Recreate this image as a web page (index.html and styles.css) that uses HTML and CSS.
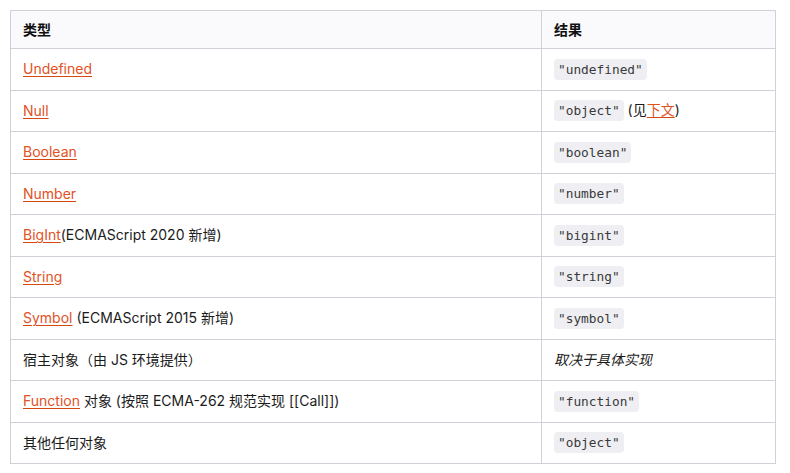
FILE: index.html
```html
<!DOCTYPE html>
<html lang="zh">
<head>
<meta charset="utf-8">
<link rel="stylesheet" href="styles.css">
</head>
<body>
<table class="tbl">
  <thead>
    <tr><th class="c1">类型</th><th>结果</th></tr>
  </thead>
  <tbody>
    <tr><td><a href="#">Undefined</a></td><td><code>"undefined"</code></td></tr>
    <tr><td><a href="#">Null</a></td><td><code>"object"</code> (见<a href="#">下文</a>)</td></tr>
    <tr><td><a href="#">Boolean</a></td><td><code>"boolean"</code></td></tr>
    <tr><td><a href="#">Number</a></td><td><code>"number"</code></td></tr>
    <tr><td><a href="#">BigInt</a>(ECMAScript 2020 新增)</td><td><code>"bigint"</code></td></tr>
    <tr><td><a href="#">String</a></td><td><code>"string"</code></td></tr>
    <tr><td><a href="#">Symbol</a> (ECMAScript 2015 新增)</td><td><code>"symbol"</code></td></tr>
    <tr><td>宿主对象（由 JS 环境提供）</td><td><em>取决于具体实现</em></td></tr>
    <tr><td><a href="#">Function</a> 对象 (按照 ECMA-262 规范实现 [[Call]])</td><td><code>"function"</code></td></tr>
    <tr><td>其他任何对象</td><td><code>"object"</code></td></tr>
  </tbody>
</table>
</body>
</html>
```
FILE: styles.css
```css
html, body { margin: 0; padding: 0; background: #fff; }
body {
  padding: 10px;
  font-family: Inter, "Noto Sans CJK SC", sans-serif;
  font-size: 14px;
  color: #1b1b1b;
}
.tbl {
  border-collapse: collapse;
  width: 766px;
  table-layout: fixed;
}
.tbl th, .tbl td {
  border: 1px solid #d0d0d9;
  padding: 0 12px;
  text-align: left;
  vertical-align: middle;
  line-height: 20px;
}
.tbl th {
  height: 37px;
  background: #fafafc;
  font-weight: 600;
  color: #111;
}
.tbl th.c1 { width: 506px; }
.tbl td { height: 40.5px; }
.tbl a {
  color: #e2521f;
  text-decoration: underline;
  text-decoration-color: #d44812;
  text-underline-offset: 2px;
}
.tbl code {
  font-family: "DejaVu Sans Mono", monospace;
  font-size: 12.8px;
  background: #efeff3;
  color: #3a3a3a;
  border-radius: 4px;
  padding: 3px 4px;
}
.tbl em { font-style: italic; }
```
